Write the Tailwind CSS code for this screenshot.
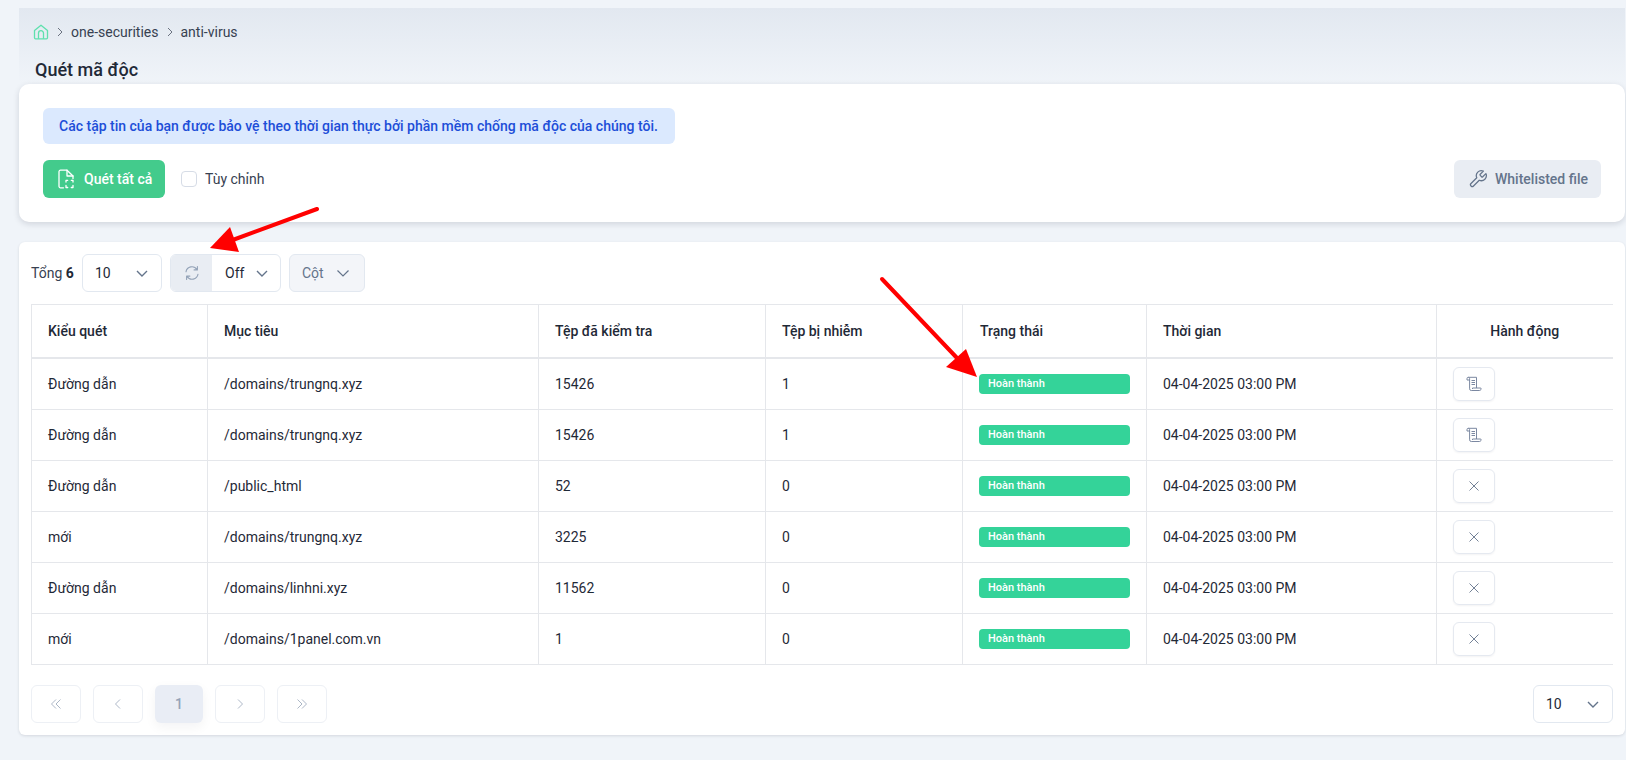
<!DOCTYPE html>
<html lang="vi">

<head>
    <meta charset="UTF-8">
    <meta name="viewport" content="width=device-width, initial-scale=1.0">
    <title>Quét mã độc</title>
    <script src="https://cdn.jsdelivr.net/npm/@tailwindcss/browser@4"></script>
</head>

<body class="bg-[#f0f4f9] font-['Roboto',sans-serif] text-[14px] text-[#1f2937]">
    <div class="relative h-[760px] overflow-hidden pl-[19px] pr-px pt-2">
        <!-- Breadcrumb band -->
        <div class="h-[76px] bg-gradient-to-b from-[#e2e8f0] to-[#f0f4f9] pl-[14px]">
            <div class="flex h-[48px] items-center text-[#374151]">
                <svg class="h-[16px] w-[16px] text-[#5fe0ae]" viewBox="0 0 16 16" fill="none" stroke="currentColor" stroke-width="1.3" stroke-linejoin="round">
                    <path d="M1.5 6.6 8 1.2l6.5 5.400v7.200a1 1 0 0 1-1 1h-11a1 1 0 0 1-1-1z" />
                    <path d="M5.500 14.800V9.200a2.500 2.500 0 0 1 5 0v5.600" />
                </svg>
                <svg class="mx-[6px] h-[12px] w-[10px] text-[#6b7280]" viewBox="0 0 10 12" fill="none" stroke="currentColor"><path d="m3 2 4 4-4 4" /></svg>
                <span>one-securities</span>
                <svg class="mx-[6px] h-[12px] w-[10px] text-[#6b7280]" viewBox="0 0 10 12" fill="none" stroke="currentColor"><path d="m3 2 4 4-4 4" /></svg>
                <span>anti-virus</span>
            </div>
            <h1 class="pl-[2px] text-[18px] leading-[28px] font-medium text-[#1f2937]">Quét mã độc</h1>
        </div>

        <!-- Scan card -->
        <div class="h-[138px] rounded-[10px] bg-white px-6 pt-6 shadow-[0_2px_6px_rgba(15,23,42,0.14)]">
            <div class="flex h-9 w-[632px] items-center rounded-md bg-[#dbe9fe] pl-4 font-medium text-[#1d4ed8]">
                Các tập tin của bạn được bảo vệ theo thời gian thực bởi phần mềm chống mã độc của chúng tôi.
            </div>
            <div class="mt-4 flex items-center">
                <button class="flex h-[38px] w-[122px] items-center gap-[9px] rounded-md bg-[#43cb8c] pl-[15px] font-medium text-white">
                    <svg class="h-[20px] w-[17px]" viewBox="0 0 17 20" fill="none" stroke="currentColor" stroke-width="1.3" stroke-linecap="round" stroke-linejoin="round">
                        <path d="M5.500 18.800H2.500A1.500 1.500 0 0 1 1 17.300V2.700A1.500 1.500 0 0 1 2.500 1.200H9L15 7v2.500" />
                        <path d="M9 1.200V7h6" />
                        <path d="M8 13v-1.700h1.700M13.300 11.300H15V13M15 16.500v2h-1.700M9.700 18.500H8v-2" />
                    </svg>
                    Quét tất cả
                </button>
                <span class="ml-4 h-4 w-4 rounded-[4px] border border-[#d6dce6] bg-white"></span>
                <span class="ml-2 text-[#374151]">Tùy chỉnh</span>
                <button class="ml-auto flex h-[38px] w-[147px] items-center gap-[7px] rounded-md bg-[#e9edf3] pl-[14px] font-medium text-[#64748b]">
                    <svg class="h-[20px] w-[20px]" viewBox="0 0 24 24" fill="none" stroke="currentColor" stroke-width="1.5" stroke-linecap="round" stroke-linejoin="round">
                        <path d="M14.700 6.300a1 1 0 0 0 0 1.400l1.600 1.600a1 1 0 0 0 1.400 0l3.770-3.770a6 6 0 0 1-7.940 7.940l-6.910 6.910a2.120 2.120 0 0 1-3-3l6.910-6.910a6 6 0 0 1 7.940-7.940z" />
                    </svg>
                    Whitelisted file
                </button>
            </div>
        </div>

        <!-- Table card -->
        <div class="mt-5 h-[493px] rounded-md bg-white px-3 pt-3 shadow-[0_1px_3px_rgba(15,23,42,0.12)]">
            <div class="flex h-[38px] items-center">
                <span class="w-[51px] text-[#374151]">Tổng <b class="font-bold text-[#1f2937]">6</b></span>
                <div class="flex h-[38px] w-[80px] items-center justify-between rounded-md border border-[#e2e8f0] px-[12px]">
                    <span>10</span>
                    <svg class="h-[14px] w-[14px] text-[#64748b]" viewBox="0 0 14 14" fill="none" stroke="currentColor" stroke-width="1.4"><path d="m2 5 5 5 5-5" /></svg>
                </div>
                <div class="ml-2 flex h-[38px] w-[111px] items-center overflow-hidden rounded-md border border-[#e2e8f0]">
                    <div class="flex h-full w-[41px] items-center justify-center bg-[#e9edf3] text-[#94a3b8]">
                        <svg class="h-[16px] w-[16px]" viewBox="0 0 16 16" fill="none" stroke="currentColor" stroke-width="1.1" stroke-linecap="round" stroke-linejoin="round">
                            <path d="M2 6.800A6 6 0 0 1 13 4.600M13.400 1.600v3.300h-3.300" />
                            <path d="M14 9.200A6 6 0 0 1 3 11.400M2.600 14.400v-3.300h3.300" />
                        </svg>
                    </div>
                    <span class="ml-[13px]">Off</span>
                    <svg class="ml-[11px] h-[14px] w-[14px] text-[#64748b]" viewBox="0 0 14 14" fill="none" stroke="currentColor" stroke-width="1.4"><path d="m2 5 5 5 5-5" /></svg>
                </div>
                <div class="ml-2 flex h-[38px] w-[76px] items-center rounded-md border border-[#e2e8f0] bg-[#f3f5f9] pl-[12px] text-[#64748b]">
                    <span>Cột</span>
                    <svg class="ml-[12px] h-[14px] w-[14px]" viewBox="0 0 14 14" fill="none" stroke="currentColor" stroke-width="1.2"><path d="m1.500 4.500 5.500 5.500 5.500-5.500" /></svg>
                </div>
            </div>

            <table class="mt-3 w-[1581px] table-fixed border-collapse text-left">
                <colgroup>
                    <col class="w-[176px]">
                    <col class="w-[331px]">
                    <col class="w-[227px]">
                    <col class="w-[197px]">
                    <col class="w-[184px]">
                    <col class="w-[290px]">
                    <col class="w-[176px]">
                </colgroup>
                <thead>
                    <tr class="h-[53px] border-t border-b-2 border-[#e5e7eb]">
                        <th class="border-x border-[#e5e7eb] pl-4 pt-px font-medium">Kiểu quét</th>
                        <th class="border-r border-[#e5e7eb] pl-4 pt-px font-medium">Mục tiêu</th>
                        <th class="border-r border-[#e5e7eb] pl-4 pt-px font-medium">Tệp đã kiểm tra</th>
                        <th class="border-r border-[#e5e7eb] pl-4 pt-px font-medium">Tệp bị nhiễm</th>
                        <th class="border-r border-[#e5e7eb] pl-[17px] pt-px font-medium">Trạng thái</th>
                        <th class="border-r border-[#e5e7eb] pl-4 pt-px font-medium">Thời gian</th>
                        <th class="pt-px text-center font-medium">Hành động</th>
                    </tr>
                </thead>
                <tbody id="scanRows"></tbody>
            </table>

            <!-- Pagination -->
            <div class="mt-[20px] flex items-center">
                <div class="flex gap-3 text-[#a3afc0]">
                    <button class="flex h-[38px] w-[50px] items-center justify-center rounded-md border border-[#edf0f5]">
                        <svg class="h-[12px] w-[12px]" viewBox="0 0 12 12" fill="none" stroke="currentColor" stroke-width="0.9"><path d="M6 1.500 1.500 6 6 10.500M10.500 1.500 6 6l4.500 4.500" /></svg>
                    </button>
                    <button class="flex h-[38px] w-[50px] items-center justify-center rounded-md border border-[#edf0f5]">
                        <svg class="h-[12px] w-[12px]" viewBox="0 0 12 12" fill="none" stroke="currentColor" stroke-width="0.9"><path d="M8 1.500 3.500 6 8 10.500" /></svg>
                    </button>
                    <button class="flex h-[38px] w-[48px] items-center justify-center rounded-md bg-[#e9edf5] font-medium text-[#94a3b8] shadow-[0_4px_12px_rgba(15,23,42,0.05)]">1</button>
                    <button class="flex h-[38px] w-[50px] items-center justify-center rounded-md border border-[#edf0f5]">
                        <svg class="h-[12px] w-[12px]" viewBox="0 0 12 12" fill="none" stroke="currentColor" stroke-width="0.9"><path d="m4 1.500 4.500 4.500L4 10.500" /></svg>
                    </button>
                    <button class="flex h-[38px] w-[50px] items-center justify-center rounded-md border border-[#edf0f5]">
                        <svg class="h-[12px] w-[12px]" viewBox="0 0 12 12" fill="none" stroke="currentColor" stroke-width="0.9"><path d="M1.500 1.500 6 6l-4.500 4.500M6 1.500 10.500 6 6 10.500" /></svg>
                    </button>
                </div>
                <div class="ml-[1206px] flex h-[38px] w-[80px] items-center justify-between rounded-md border border-[#e2e8f0] px-[12px]">
                    <span>10</span>
                    <svg class="h-[14px] w-[14px] text-[#64748b]" viewBox="0 0 14 14" fill="none" stroke="currentColor" stroke-width="1.4"><path d="m2 5 5 5 5-5" /></svg>
                </div>
            </div>
        </div>

        <!-- Red annotation arrows -->
        <svg class="pointer-events-none absolute left-0 top-0" width="1626" height="760" fill="#ff0000" stroke="none">
            <path d="M317 209 230 241" stroke="#ff0000" stroke-width="4" stroke-linecap="round" />
            <path d="M210 248 230 227 239 252z" />
            <path d="M882 279 957 358" stroke="#ff0000" stroke-width="4" stroke-linecap="round" />
            <path d="M977 377 966 349 946 367z" />
        </svg>
    </div>

    <script>
        const rows = [
            ['Đường dẫn', '/domains/trungnq.xyz', '15426', '1', 'log'],
            ['Đường dẫn', '/domains/trungnq.xyz', '15426', '1', 'log'],
            ['Đường dẫn', '/public_html', '52', '0', 'x'],
            ['mới', '/domains/trungnq.xyz', '3225', '0', 'x'],
            ['Đường dẫn', '/domains/linhni.xyz', '11562', '0', 'x'],
            ['mới', '/domains/1panel.com.vn', '1', '0', 'x'],
        ];

        const logIcon = `<svg class="h-[16px] w-[16px] text-[#7b88a1]" viewBox="0 0 16 16" fill="none" stroke="currentColor" stroke-width="1">
            <path d="M1 2.600A1.300 1.300 0 0 1 2.300 1.300h8.200v10.700" />
            <path d="M1 2.600v1.400h2.600V2.600a1.300 1.300 0 0 0-1.300-1.300" />
            <path d="M3.600 4v8.800a1.700 1.700 0 0 0 1.700 1.700h8a1.600 1.600 0 0 0 1.500-2.500H6.500v1" />
            <path d="M5.500 4.500h3.500M5.500 6.500h3.500M5.500 8.500h3.500" />
        </svg>`;
        const closeIcon = `<svg class="h-[12px] w-[12px] text-[#64748b]" viewBox="0 0 12 12" fill="none" stroke="currentColor" stroke-width="0.9"><path d="m1.500 1.500 9 9M10.500 1.500l-9 9" /></svg>`;

        document.getElementById('scanRows').innerHTML = rows.map((row, i) => `
            <tr class="${i === 0 ? 'h-[52px]' : 'h-[51px]'} border-b border-[#e5e7eb]">
                <td class="border-x border-[#e5e7eb] pl-4 ${i === 0 ? 'pt-px' : ''}">${row[0]}</td>
                <td class="border-r border-[#e5e7eb] pl-4 ${i === 0 ? 'pt-px' : ''}">${row[1]}</td>
                <td class="border-r border-[#e5e7eb] pl-4 ${i === 0 ? 'pt-px' : ''}">${row[2]}</td>
                <td class="border-r border-[#e5e7eb] pl-4 ${i === 0 ? 'pt-px' : ''}">${row[3]}</td>
                <td class="border-r border-[#e5e7eb] px-4">
                    <div class="flex h-5 items-center rounded-[4px] bg-[#34d399] pl-[9px] pt-px text-[11px] font-medium text-white">Hoàn thành</div>
                </td>
                <td class="border-r border-[#e5e7eb] pl-4 ${i === 0 ? 'pt-px' : ''}">04-04-2025 03:00 PM</td>
                <td class="pl-4">
                    <button class="flex h-[34px] w-[42px] items-center justify-center rounded-md border border-[#e5e9f0] shadow-[0_1px_2px_rgba(15,23,42,0.05)]">
                        ${row[4] === 'log' ? logIcon : closeIcon}
                    </button>
                </td>
            </tr>`).join('');
    </script>
</body>

</html>
